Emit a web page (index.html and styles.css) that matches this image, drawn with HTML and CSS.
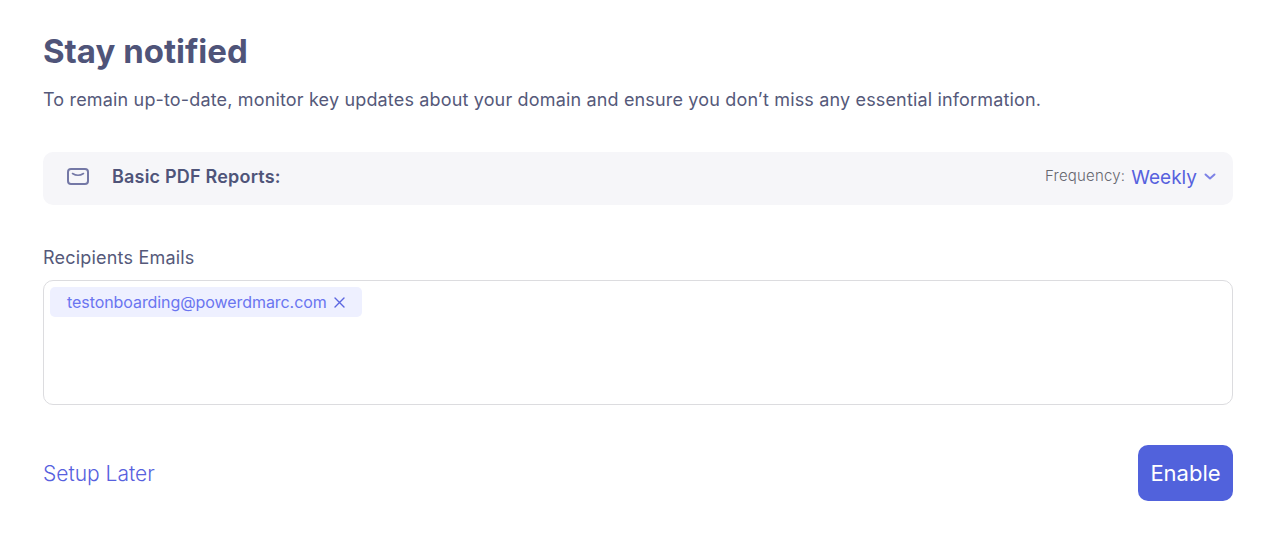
FILE: index.html
```html
<!DOCTYPE html>
<html lang="en">
<head>
    <meta charset="UTF-8">
    <meta name="viewport" content="width=device-width, initial-scale=1.0">
    <title>Stay notified</title>
    <link rel="stylesheet" href="styles.css">
</head>
<body>

    <div class="panel">
        <h1 class="title">Stay notified</h1>
        <p class="intro">To remain up-to-date, monitor key updates about your domain and ensure you don’t miss any essential information.</p>

        <div class="report-row">
            <div class="report-name">
                <svg class="mail-icon" width="22" height="17" viewBox="0 0 22 17" fill="none">
                    <rect x="1" y="1" width="20" height="15" rx="3" stroke="#7478a6" stroke-width="2"/>
                    <path d="M5.5 5.5 Q11 9 16.5 5.5" stroke="#7478a6" stroke-width="1.6" stroke-linecap="round"/>
                </svg>
                <span>Basic PDF Reports:</span>
            </div>
            <div class="frequency">
                <span class="frequency-label">Frequency:</span>
                <span class="frequency-value">Weekly</span>
                <svg class="chevron" width="12" height="7" viewBox="0 0 12 7" fill="none">
                    <path d="M1.5 1.5 L6 5.5 L10.5 1.5" stroke="#7d82e6" stroke-width="2" stroke-linecap="round" stroke-linejoin="round"/>
                </svg>
            </div>
        </div>

        <label class="field-label">Recipients Emails</label>
        <div class="email-box">
            <span class="chip">
                testonboarding@powerdmarc.com
                <svg width="11" height="11" viewBox="0 0 11 11" fill="none">
                    <path d="M1 1 L10 10 M10 1 L1 10" stroke="#5b66e0" stroke-width="1.4" stroke-linecap="round"/>
                </svg>
            </span>
        </div>

        <div class="actions">
            <a class="later" href="#">Setup Later</a>
            <button class="enable">Enable</button>
        </div>
    </div>

</body>
</html>
```

FILE: styles.css
```css
body {
    font-family: Inter, "Noto Sans", sans-serif;
    margin: 0;
    background-color: #fff;
}

.panel {
    padding: 30px 29px 32px 43px;
}

.title {
    margin: 0;
    font-size: 33px;
    line-height: 42px;
    font-weight: 700;
    color: #4f5479;
}

.intro {
    margin: 17px 0 0;
    font-size: 18px;
    line-height: 22px;
    letter-spacing: 0.16px;
    color: #55597a;
}

.report-row {
    display: flex;
    justify-content: space-between;
    align-items: center;
    height: 53px;
    margin-top: 41px;
    padding: 0 17px 4px 24px;
    box-sizing: border-box;
    background-color: #f6f6f9;
    border-radius: 10px;
}

.report-name {
    display: flex;
    align-items: center;
    gap: 23px;
    font-size: 18px;
    font-weight: 600;
    letter-spacing: 0.2px;
    color: #4f5479;
}

.frequency {
    display: flex;
    align-items: center;
    gap: 6px;
}

.frequency-label {
    font-size: 15px;
    font-weight: 300;
    letter-spacing: 0.2px;
    color: #66676f;
    margin-bottom: 2px;
}

.frequency-value {
    font-size: 19px;
    color: #5761de;
    margin-top: 2px;
}

.chevron {
    margin-left: 1px;
}

.field-label {
    display: block;
    margin-top: 41px;
    font-size: 18px;
    line-height: 23px;
    letter-spacing: 0.2px;
    color: #55597a;
}

.email-box {
    height: 125px;
    margin-top: 11px;
    padding: 6px;
    box-sizing: border-box;
    border: 1px solid #dcdcdf;
    border-radius: 10px;
}

.chip {
    display: inline-flex;
    align-items: center;
    gap: 7px;
    height: 30px;
    padding: 0 17px;
    box-sizing: border-box;
    background-color: #eef0ff;
    border-radius: 5px;
    font-size: 16px;
    letter-spacing: -0.07px;
    color: #6a75f0;
}

.actions {
    display: flex;
    justify-content: space-between;
    align-items: center;
    margin-top: 40px;
}

.later {
    font-size: 21px;
    font-weight: 300;
    color: #5761de;
    text-decoration: none;
    margin-top: 1px;
}

.enable {
    width: 95px;
    height: 56px;
    font-family: inherit;
    font-size: 22px;
    color: #fff;
    background-color: #5162dc;
    border: none;
    border-radius: 10px;
    cursor: pointer;
}
```
